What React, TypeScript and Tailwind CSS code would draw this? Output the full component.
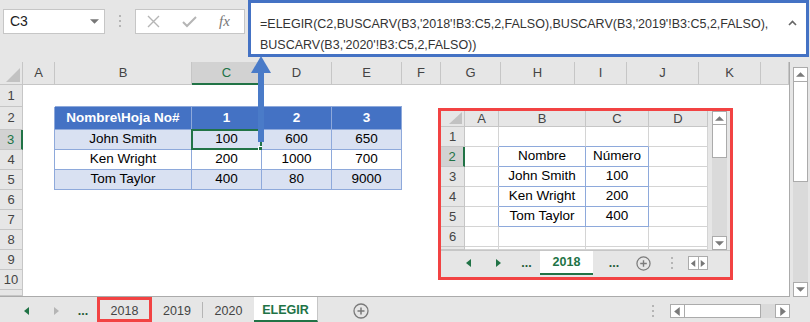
import React from "react";

type Dir = "left" | "right" | "up" | "down";

function Tri({ dir, color, size = 8 }: { dir: Dir; color: string; size?: number }) {
  const pts: Record<Dir, string> = {
    left: "6,0 6,8 1,4",
    right: "2,0 2,8 7,4",
    up: "0,6 8,6 4,2",
    down: "0,2 8,2 4,6",
  };
  return (
    <svg width={size} height={size} viewBox="0 0 8 8">
      <polygon points={pts[dir]} fill={color} />
    </svg>
  );
}

function PlusCircle({ size = 16 }: { size?: number }) {
  return (
    <svg width={size} height={size} viewBox="0 0 16 16" fill="none">
      <circle cx="8" cy="8" r="7" stroke="#7a7a7a" strokeWidth="1.3" />
      <path d="M8 4.5V11.5M4.5 8H11.5" stroke="#7a7a7a" strokeWidth="1.5" />
    </svg>
  );
}

function VDots() {
  return (
    <div className="flex flex-col gap-[3px]">
      <span className="h-[2px] w-[2px] bg-[#b5b5b5]" />
      <span className="h-[2px] w-[2px] bg-[#b5b5b5]" />
      <span className="h-[2px] w-[2px] bg-[#b5b5b5]" />
    </div>
  );
}

function ArrowBox({ dir, className }: { dir: Dir; className: string }) {
  return (
    <div className={"flex items-center justify-center bg-white border border-[#ababab] " + className}>
      <Tri dir={dir} color="#7a7a7a" size={9} />
    </div>
  );
}

function TopBar() {
  return (
    <div className="flex h-[62px] items-start">
      <div className="ml-[3px] mt-[9px] flex h-[25px] w-[102px] items-center justify-between border border-[#c6c6c6] bg-white pl-[6px] pr-[5px] text-[14px] text-[#222]">
        <span>C3</span>
        <Tri dir="down" color="#777" size={9} />
      </div>
      <div className="mt-[15px] flex w-[30px] justify-center">
        <VDots />
      </div>
      <div className="mt-[9px] flex h-[25px] w-[110px] items-center border border-[#c6c6c6] bg-white">
        <svg className="ml-[11px]" width="13" height="13" viewBox="0 0 13 13">
          <path d="M1 1L12 12M12 1L1 12" stroke="#b5b5b5" strokeWidth="1.4" />
        </svg>
        <svg className="ml-[22px]" width="15" height="13" viewBox="0 0 15 13">
          <path d="M1 7L5 11L14 2" stroke="#b5b5b5" strokeWidth="2" fill="none" />
        </svg>
        <span className="ml-[22px] font-['Liberation_Serif',serif] text-[15px] italic text-[#777]">fx</span>
      </div>
      <div className="relative ml-[3px] h-[57px] w-[561px] border-[3px] border-[#4472c4] bg-white pl-[9px] pt-[11px] text-[12.5px] leading-[21px] text-[#333]">
        <div>=ELEGIR(C2,BUSCARV(B3,'2018'!B3:C5,2,FALSO),BUSCARV(B3,'2019'!B3:C5,2,FALSO),</div>
        <div>BUSCARV(B3,'2020'!B3:C5,2,FALSO))</div>
        <svg className="absolute right-[9px] top-[17px]" width="9" height="6" viewBox="0 0 9 6">
          <path d="M1 5L4.5 1.5L8 5" stroke="#666" strokeWidth="1.6" fill="none" />
        </svg>
      </div>
    </div>
  );
}

const mainCols = ["A", "B", "C", "D", "E", "F", "G", "H", "I", "J", "K", ""];

const mainData: Record<number, string[]> = {
  2: ["Nombre\\Hoja No#", "1", "2", "3"],
  3: ["John Smith", "100", "600", "650"],
  4: ["Ken Wright", "200", "1000", "700"],
  5: ["Tom Taylor", "400", "80", "9000"],
};

function mainCellClass(r: number, c: number) {
  const inTable = c >= 1 && c <= 4;
  if (r === 2 && inTable) return "bg-[#4472c4] text-white font-bold border-r border-b border-[#8ea9db]";
  if ((r === 3 || r === 5) && inTable) return "bg-[#d9e1f2] text-black border-r border-b border-[#8ea9db]";
  if (r === 4 && inTable) return "bg-white text-black border-r border-b border-[#8ea9db]";
  if (r === 1 && inTable) return "bg-white border-b border-[#8ea9db]";
  if (r >= 2 && r <= 5 && c === 0) return "bg-white border-r border-[#8ea9db]";
  return "bg-white";
}

function MainSheet() {
  const rows = [1, 2, 3, 4, 5, 6, 7, 8, 9, 10, 11];
  return (
    <div className="grid h-[235px] w-[790px] grid-cols-[23px_32px_137px_70px_70px_70px_39px_60px_74px_52px_72px_62px_28px] grid-rows-[23px_22px_23px_20px_20px_20px_20px_20px_20px_20px_20px_6px] border-r border-b border-[#ababab] text-[13.5px]">
      <div className="relative border-r border-b border-[#c6c6c6]">
        <svg className="absolute left-[6px] top-[6px]" width="14" height="14" viewBox="0 0 14 14">
          <polygon points="14,0 14,14 0,14" fill="#c2c2c2" />
        </svg>
      </div>
      {mainCols.map((l, i) =>
        l === "C" ? (
          <div key={i} className="flex items-center justify-center border-r border-b-2 border-r-[#c6c6c6] border-b-[#217346] bg-[#d2d2d2] text-[13px] text-[#217346]">
            {l}
          </div>
        ) : (
          <div key={i} className="flex items-center justify-center border-r border-b border-[#c6c6c6] text-[13px] text-[#444]">
            {l}
          </div>
        )
      )}
      {rows.map((r) => (
        <React.Fragment key={r}>
          {r === 3 ? (
            <div className="flex items-center justify-center border-r-2 border-b border-r-[#217346] border-b-[#c6c6c6] bg-[#d2d2d2] text-[13px] text-[#217346]">
              {r}
            </div>
          ) : (
            <div className="flex items-center justify-center overflow-hidden border-r border-b border-[#c6c6c6] text-[13px] text-[#444]">
              {r <= 10 ? r : ""}
            </div>
          )}
          {mainCols.map((_, c) => {
            const txt = mainData[r] && c >= 1 && c <= 4 ? mainData[r][c - 1] : "";
            const sel = r === 3 && c === 2;
            return (
              <div key={c} className={"relative flex items-center justify-center " + mainCellClass(r, c)}>
                {txt}
                {sel && (
                  <>
                    <div className="absolute -left-px -top-px -right-px -bottom-px border-2 border-[#217346]" />
                    <div className="absolute -bottom-[4px] -right-[4px] h-[7px] w-[7px] border border-white bg-[#217346]" />
                  </>
                )}
              </div>
            );
          })}
        </React.Fragment>
      ))}
    </div>
  );
}

const innerCols = ["A", "B", "C", "D"];
const innerData: Record<number, string[]> = {
  2: ["Nombre", "Número"],
  3: ["John Smith", "100"],
  4: ["Ken Wright", "200"],
  5: ["Tom Taylor", "400"],
};

function innerCellClass(r: number, c: number) {
  const inTable = c === 1 || c === 2;
  if (r >= 2 && r <= 5 && inTable) return "border-r border-b border-[#8ea9db]";
  if (r === 1 && inTable) return "border-r border-b border-r-[#d4d4d4] border-b-[#8ea9db]";
  if (r >= 2 && r <= 5 && c === 0) return "border-r border-b border-r-[#8ea9db] border-b-[#d4d4d4]";
  return "border-r border-b border-[#d4d4d4]";
}

function InnerSheet() {
  const rows = [1, 2, 3, 4, 5, 6, 7];
  return (
    <div className="absolute left-[438px] top-[108px] flex h-[172px] w-[295px] flex-col border-[3px] border-[#f24343] bg-[#e6e6e6]">
      <div className="flex h-[139px]">
        <div className="grid w-[267px] grid-cols-[24px_34px_87px_63px_59px] grid-rows-[16px_20px_20px_20px_20px_20px_20px_3px] text-[13.5px]">
          <div className="relative border-r border-b border-[#c6c6c6]">
            <svg className="absolute left-[8px] top-[1px]" width="13" height="12" viewBox="0 0 13 12">
              <polygon points="13,0 13,12 0,12" fill="#c2c2c2" />
            </svg>
          </div>
          {innerCols.map((l) => (
            <div key={l} className="flex items-center justify-center border-r border-b border-[#c6c6c6] text-[13px] text-[#444]">
              {l}
            </div>
          ))}
          {rows.map((r) => (
            <React.Fragment key={r}>
              {r === 2 ? (
                <div className="flex items-center justify-center border-r-2 border-b border-r-[#217346] border-b-[#c6c6c6] bg-[#d2d2d2] text-[13px] text-[#217346]">
                  {r}
                </div>
              ) : (
                <div className="flex items-center justify-center overflow-hidden border-r border-b border-[#c6c6c6] text-[13px] text-[#444]">
                  {r <= 6 ? r : ""}
                </div>
              )}
              {innerCols.map((_, c) => (
                <div key={c} className={"flex items-center justify-center overflow-hidden bg-white text-black " + innerCellClass(r, c)}>
                  {innerData[r] && (c === 1 || c === 2) ? innerData[r][c - 1] : ""}
                </div>
              ))}
            </React.Fragment>
          ))}
        </div>
        <div className="ml-[4px] flex w-[15px] flex-col">
          <ArrowBox dir="up" className="h-[14px]" />
          <div className="h-[33px] border border-t-0 border-[#ababab] bg-white" />
          <div className="flex-1 bg-[#dadada]" />
          <ArrowBox dir="down" className="h-[14px]" />
        </div>
      </div>
      <div className="flex h-[25px] items-stretch border-t border-[#c6c6c6] text-[12.5px]">
        <div className="w-[14px]" />
        <div className="flex w-[28px] items-center justify-center"><Tri dir="left" color="#217346" /></div>
        <div className="flex w-[30px] items-center justify-center"><Tri dir="right" color="#217346" /></div>
        <div className="flex w-[27px] items-center justify-center font-bold text-[#245b37]">...</div>
        <div className="flex w-[53px] items-center justify-center border-b-2 border-[#217346] bg-white font-bold text-[#217346]">2018</div>
        <div className="flex w-[42px] items-center justify-center font-bold text-[#245b37]">...</div>
        <div className="flex w-[16px] items-center justify-center"><PlusCircle size={15} /></div>
        <div className="w-[12px]" />
        <div className="flex w-[18px] items-center justify-center"><VDots /></div>
        <div className="w-[7px]" />
        <div className="my-[5px] flex w-[20px] border border-[#ababab] bg-white">
          <div className="flex flex-1 items-center justify-center border-r border-[#ababab]"><Tri dir="left" color="#777" size={7} /></div>
          <div className="flex flex-1 items-center justify-center"><Tri dir="right" color="#777" size={7} /></div>
        </div>
      </div>
    </div>
  );
}

function BottomTabs() {
  return (
    <div className="flex h-[25px] items-stretch text-[12.5px] text-[#444]">
      <div className="w-[13px]" />
      <div className="flex w-[28px] items-center justify-center pt-[3px]"><Tri dir="left" color="#217346" /></div>
      <div className="flex w-[30px] items-center justify-center pt-[3px]"><Tri dir="right" color="#b5b5b5" /></div>
      <div className="flex w-[24px] items-center justify-center pt-[3px] font-bold text-[#245b37]">...</div>
      <div className="w-[2px]" />
      <div className="relative flex w-[55px] items-center justify-center pt-[3px]">
        2018
        <div className="absolute inset-0 border-[3px] border-[#f24343]" />
      </div>
      <div className="flex w-[50px] items-center justify-center pt-[3px]">2019</div>
      <div className="mt-[5px] mb-[4px] w-px bg-[#b5b5b5]" />
      <div className="flex w-[51px] items-center justify-center pt-[3px]">2020</div>
      <div className="flex w-[64px] items-center justify-center border-r border-b-2 border-r-[#c6c6c6] border-b-[#217346] bg-white pt-[3px] font-bold text-[#217346]">
        ELEGIR
      </div>
      <div className="w-[33px]" />
      <div className="flex w-[20px] items-center justify-center pt-[3px]"><PlusCircle /></div>
      <div className="flex-1" />
      <div className="flex w-[10px] items-center justify-center pt-[3px]"><VDots /></div>
      <div className="w-[12px]" />
      <div className="mt-[7px] mb-[4px] flex w-[120px]">
        <ArrowBox dir="left" className="w-[15px]" />
        <div className="w-[76px] border-y border-r border-[#ababab] bg-white" />
        <div className="flex-1 bg-[#dadada]" />
        <ArrowBox dir="right" className="w-[15px]" />
      </div>
      <div className="w-[20px]" />
    </div>
  );
}

function BlueArrow() {
  return (
    <svg className="pointer-events-none absolute left-0 top-0" width="810" height="322" viewBox="0 0 810 322">
      <rect x="258" y="71" width="6" height="71" fill="#4a7bc8" />
      <polygon points="261,56 251,73 271,73" fill="#4a7bc8" />
    </svg>
  );
}

export default function App() {
  return (
    <div className="relative h-[322px] w-[810px] overflow-hidden bg-[#e6e6e6] font-['Liberation_Sans',Arial,sans-serif] text-[#444]">
      <TopBar />
      <div className="flex h-[235px]">
        <MainSheet />
        <div className="ml-[3px] mt-[5px] flex h-[230px] w-[15px] flex-col">
          <ArrowBox dir="up" className="h-[15px]" />
          <div className="h-[100px] border border-t-0 border-[#ababab] bg-white" />
          <div className="flex-1 bg-[#dadada]" />
          <ArrowBox dir="down" className="h-[15px]" />
        </div>
      </div>
      <BottomTabs />
      <InnerSheet />
      <BlueArrow />
    </div>
  );
}
